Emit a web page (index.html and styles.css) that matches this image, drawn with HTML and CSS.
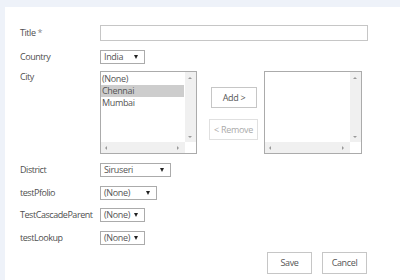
FILE: index.html
```html
<!DOCTYPE html>
<html>
<head>
<meta charset="utf-8">
<link rel="stylesheet" href="styles.css">
</head>
<body>
<div class="panel">
  <div class="row row-title">
    <div class="label">Title <span class="req">*</span></div>
    <div class="input title-input"></div>
  </div>
  <div class="row row-country">
    <div class="label">Country</div>
    <div class="select w45"><span class="val">India</span><span class="arrow"></span></div>
  </div>
  <div class="row row-city">
    <div class="label">City</div>
    <div class="picker">
      <div class="listbox">
        <div class="items">
          <div class="item">(None)</div>
          <div class="item selected">Chennai</div>
          <div class="item">Mumbai</div>
        </div>
        <div class="vscroll"><span class="tri up"></span><span class="tri down"></span></div>
        <div class="hscroll"><span class="tri left"></span><span class="tri right"></span></div>
        <div class="corner"></div>
      </div>
      <div class="movers">
        <div class="btn add">Add &gt;</div>
        <div class="btn remove">&lt; Remove</div>
      </div>
      <div class="listbox right">
        <div class="items"></div>
        <div class="vscroll"><span class="tri up"></span><span class="tri down"></span></div>
        <div class="hscroll"><span class="tri left"></span><span class="tri right"></span></div>
        <div class="corner"></div>
      </div>
    </div>
  </div>
  <div class="row row-district">
    <div class="label">District</div>
    <div class="select w71"><span class="val">Siruseri</span><span class="arrow"></span></div>
  </div>
  <div class="row row-pfolio">
    <div class="label">testPfolio</div>
    <div class="select w57"><span class="val">(None)</span><span class="arrow"></span></div>
  </div>
  <div class="row row-cascade">
    <div class="label">TestCascadeParent</div>
    <div class="select w45"><span class="val">(None)</span><span class="arrow"></span></div>
  </div>
  <div class="row row-lookup">
    <div class="label">testLookup</div>
    <div class="select w45"><span class="val">(None)</span><span class="arrow"></span></div>
  </div>
  <div class="actions">
    <div class="btn save">Save</div>
    <div class="btn cancel">Cancel</div>
  </div>
</div>
</body>
</html>
```
FILE: styles.css
```css
html, body {
  margin: 0;
  padding: 0;
  background: #eef2f9;
  height: 280px;
  overflow: hidden;
}
body {
  font-family: "Open Sans", "Noto Sans", sans-serif;
  font-size: 9px;
  letter-spacing: -0.35px;
  line-height: 12px;
  color: #555;
}
.panel {
  margin: 7px 0 0 5px;
  background: #fff;
  height: 273px;
  padding: 18px 0 0 15px;
  box-sizing: border-box;
}
.row {
  display: flex;
  align-items: center;
}
.row-country { margin-top: 9px; }
.row-city { align-items: flex-start; margin-top: 7px; }
.row-district { margin-top: 9px; }
.row-pfolio { margin-top: 9px; }
.row-cascade { margin-top: 8px; }
.row-lookup { margin-top: 9px; }
.label {
  width: 80px;
  flex: none;
  line-height: 12px;
  color: #4f4f4f;
  white-space: nowrap;
  letter-spacing: -0.45px;
}
.req { color: #888; }
.input {
  height: 16px;
  border: 1px solid #c6c6c6;
  box-sizing: border-box;
}
.title-input { width: 268px; }
.select {
  height: 14px;
  border: 1px solid #ababab;
  box-sizing: border-box;
  display: flex;
  align-items: center;
  justify-content: space-between;
  padding: 0 6px 0 3px;
  line-height: 12px;
}
.w45 { width: 45px; }
.w57 { width: 57px; }
.w71 { width: 71px; }
.arrow {
  width: 0;
  height: 0;
  border-left: 2.5px solid transparent;
  border-right: 2.5px solid transparent;
  border-top: 4px solid #222;
}
.picker {
  display: flex;
  align-items: flex-start;
}
.listbox {
  position: relative;
  width: 97px;
  height: 83px;
  border: 1px solid #ababab;
  box-sizing: border-box;
}
.listbox.right { width: 98px; }
.items {
  padding-top: 1px;
}
.item {
  height: 12px;
  line-height: 12px;
  padding-left: 1px;
  margin-right: 12px;
}
.item.selected { background: #cdcdcd; }
.vscroll {
  position: absolute;
  top: 0;
  right: 0;
  width: 11px;
  bottom: 11px;
  background: #f0f0f0;
}
.hscroll {
  position: absolute;
  left: 0;
  bottom: 0;
  right: 11px;
  height: 11px;
  background: #f0f0f0;
}
.corner {
  position: absolute;
  right: 0;
  bottom: 0;
  width: 11px;
  height: 11px;
  background: #fff;
}
.tri {
  position: absolute;
  width: 0;
  height: 0;
}
.tri.up {
  top: 5px; left: 3px;
  border-left: 2px solid transparent;
  border-right: 2px solid transparent;
  border-bottom: 2px solid #999;
}
.tri.down {
  bottom: 4px; left: 3px;
  border-left: 2px solid transparent;
  border-right: 2px solid transparent;
  border-top: 2px solid #999;
}
.tri.left {
  left: 4px; top: 4px;
  border-top: 2px solid transparent;
  border-bottom: 2px solid transparent;
  border-right: 2px solid #999;
}
.tri.right {
  right: 6px; top: 4px;
  border-top: 2px solid transparent;
  border-bottom: 2px solid transparent;
  border-left: 2px solid #999;
}
.movers {
  width: 67px;
  flex: none;
  display: flex;
  flex-direction: column;
  align-items: flex-start;
  padding-top: 16px;
}
.btn {
  box-sizing: border-box;
  border: 1px solid #c6c6c6;
  display: flex;
  align-items: center;
  justify-content: center;
  color: #555;
  background: #fff;
  white-space: nowrap;
}
.btn.add { width: 46px; height: 21px; margin-left: 14px; }
.btn.remove { width: 49px; height: 21px; margin-top: 11px; margin-left: 12px; color: #aaa; border-color: #e0e0e0; letter-spacing: -0.3px; }
.actions {
  display: flex;
  justify-content: flex-end;
  gap: 10px;
  width: 347px;
  margin-top: 7px;
}
.btn.save, .btn.cancel { width: 45px; height: 22px; }
```
